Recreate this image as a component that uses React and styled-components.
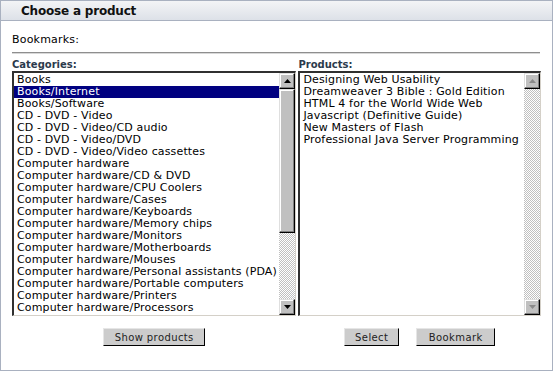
import styled, { createGlobalStyle } from "styled-components";

const Global = createGlobalStyle`
  html, body {
    margin: 0;
    padding: 0;
    background: #ffffff;
  }
  body {
    font-family: "DejaVu Sans", Verdana, sans-serif;
    font-size: 11px;
    color: #000;
  }
`;

const Window = styled.div`
  width: 553px;
  height: 371px;
  box-sizing: border-box;
  border: 1px solid #a9b1c0;
  background: #fff;
  display: flex;
  flex-direction: column;
`;

const Header = styled.div`
  height: 19px;
  border-bottom: 1px solid #a9b1c0;
  background: linear-gradient(#f3f4f6, #dde1e8);
  padding-left: 20px;
  display: flex;
  align-items: center;
  font-weight: bold;
  font-size: 12px;
  letter-spacing: -0.2px;
  color: #111;
`;

const Body = styled.div`
  padding: 13px 11px 0 11px;
  display: flex;
  flex-direction: column;
`;

const Bookmarks = styled.div`
  height: 12px;
  line-height: 12px;
  font-size: 11px;
  letter-spacing: 0.2px;
`;

const Rule = styled.div`
  margin: 6px 1px 5px 0;
  height: 0;
  border-top: 1px solid #8e8e8e;
  border-bottom: 1px solid #d8d8d8;
`;

const Columns = styled.div`
  display: flex;
  gap: 2px;
`;

const Column = styled.div`
  width: ${(p) => p.$w}px;
  display: flex;
  flex-direction: column;
`;

const Label = styled.div`
  font-weight: bold;
  font-size: 10px;
  color: #2b3a4c;
  line-height: 11px;
  height: 11px;
  margin-bottom: 1px;
`;

const ListBox = styled.div`
  height: 245px;
  box-sizing: border-box;
  border-top: 2px solid #303030;
  border-left: 2px solid #303030;
  border-right: 1px solid #d4d0c8;
  border-bottom: 1px solid #d4d0c8;
  display: flex;
  background: #fff;
`;

const Items = styled.div`
  flex: 1;
  overflow: hidden;
  padding-top: 1px;
`;

const Item = styled.div`
  height: 12px;
  line-height: 12px;
  padding-left: 3px;
  font-size: 11px;
  letter-spacing: 0.15px;
  white-space: nowrap;
  color: ${(p) => (p.$selected ? "#fff" : "#000")};
  background: ${(p) => (p.$selected ? "#000080" : "transparent")};
`;

const Scroll = styled.div`
  width: 16px;
  flex: none;
  display: flex;
  flex-direction: column;
  background-color: #fff;
  background-image: repeating-conic-gradient(#c0c0c0 0 25%, #ffffff 0 50%);
  background-size: 2px 2px;
`;

const Arrow = styled.div`
  width: 16px;
  height: 16px;
  box-sizing: border-box;
  background: #c0c0c0;
  border-top: 1px solid #dfdfdf;
  border-left: 1px solid #dfdfdf;
  border-right: 1px solid #000;
  border-bottom: 1px solid #000;
  box-shadow: inset -1px -1px 0 #808080, inset 1px 1px 0 #fff;
  display: flex;
  align-items: center;
  justify-content: center;
`;

const Thumb = styled.div`
  height: ${(p) => p.$h}px;
  box-sizing: border-box;
  background: #c0c0c0;
  border-top: 1px solid #dfdfdf;
  border-left: 1px solid #dfdfdf;
  border-right: 1px solid #000;
  border-bottom: 1px solid #000;
  box-shadow: inset -1px -1px 0 #808080, inset 1px 1px 0 #fff;
`;

const Track = styled.div`
  flex: 1;
`;

const Buttons = styled.div`
  display: flex;
  justify-content: center;
  gap: 17px;
  margin-top: 12px;
`;

const Button = styled.button`
  height: 18px;
  width: ${(p) => p.$w}px;
  padding: 0;
  box-sizing: border-box;
  background: #cccccc;
  border: none;
  border-right: 1px solid #000;
  border-bottom: 1px solid #000;
  border-top: 1px solid #e6e6e6;
  border-left: 1px solid #e6e6e6;
  font-family: "DejaVu Sans", Verdana, sans-serif;
  font-size: 10px;
  letter-spacing: 0.4px;
  color: #222;
`;

function Tri({ up, disabled }) {
  const c = disabled ? "#8a8a8a" : "#000";
  return (
    <svg width="7" height="4" viewBox="0 0 7 4">
      {up ? (
        <polygon points="3.5,0 7,4 0,4" fill={c} />
      ) : (
        <polygon points="0,0 7,0 3.5,4" fill={c} />
      )}
    </svg>
  );
}

function ScrollBar({ thumb, disabled }) {
  return (
    <Scroll>
      <Arrow>
        <Tri up disabled={disabled} />
      </Arrow>
      {thumb ? <Thumb $h={thumb} /> : null}
      <Track />
      <Arrow>
        <Tri disabled={disabled} />
      </Arrow>
    </Scroll>
  );
}

const categories = [
  "Books",
  "Books/Internet",
  "Books/Software",
  "CD - DVD - Video",
  "CD - DVD - Video/CD audio",
  "CD - DVD - Video/DVD",
  "CD - DVD - Video/Video cassettes",
  "Computer hardware",
  "Computer hardware/CD & DVD",
  "Computer hardware/CPU Coolers",
  "Computer hardware/Cases",
  "Computer hardware/Keyboards",
  "Computer hardware/Memory chips",
  "Computer hardware/Monitors",
  "Computer hardware/Motherboards",
  "Computer hardware/Mouses",
  "Computer hardware/Personal assistants (PDA)",
  "Computer hardware/Portable computers",
  "Computer hardware/Printers",
  "Computer hardware/Processors",
];

const products = [
  "Designing Web Usability",
  "Dreamweaver 3 Bible : Gold Edition",
  "HTML 4 for the World Wide Web",
  "Javascript (Definitive Guide)",
  "New Masters of Flash",
  "Professional Java Server Programming",
];

export default function App() {
  return (
    <>
      <Global />
      <Window>
        <Header>Choose a product</Header>
        <Body>
          <Bookmarks>Bookmarks:</Bookmarks>
          <Rule />
          <Columns>
            <Column $w={285}>
              <Label>Categories:</Label>
              <ListBox>
                <Items>
                  {categories.map((c, i) => (
                    <Item key={c} $selected={i === 1}>
                      {c}
                    </Item>
                  ))}
                </Items>
                <ScrollBar thumb={144} />
              </ListBox>
              <Buttons>
                <Button $w={102}>Show products</Button>
              </Buttons>
            </Column>
            <Column $w={243}>
              <Label>Products:</Label>
              <ListBox>
                <Items>
                  {products.map((p) => (
                    <Item key={p}>{p}</Item>
                  ))}
                </Items>
                <ScrollBar disabled />
              </ListBox>
              <Buttons>
                <Button $w={55}>Select</Button>
                <Button $w={79}>Bookmark</Button>
              </Buttons>
            </Column>
          </Columns>
        </Body>
      </Window>
    </>
  );
}
